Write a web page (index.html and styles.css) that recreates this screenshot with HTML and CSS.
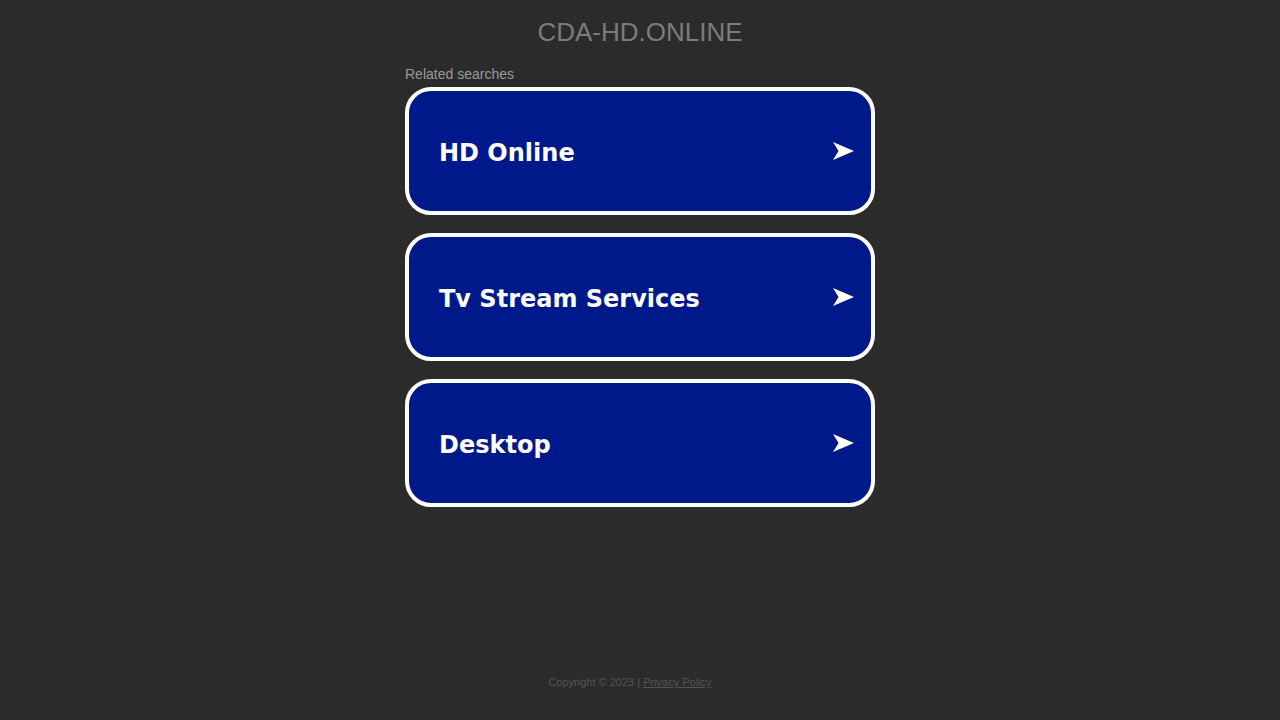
FILE: index.html
```html
<!DOCTYPE html>
<html lang="en">
<head>
<meta charset="utf-8">
<meta name="viewport" content="width=device-width, initial-scale=1">
<title>cda-hd.online</title>
<link rel="stylesheet" href="styles.css">
</head>
<body>
<header class="header"><h1 class="domain">CDA-HD.ONLINE</h1></header>
<main class="content">
  <h2 class="label">Related searches</h2>
  <nav class="links" aria-label="Related searches">
    <a class="card" href="#"><span class="card-title">HD Online</span><svg class="arrow" viewBox="0 0 21 18" aria-hidden="true"><path d="M0 0L21 9L0 18L5.5 9Z"/></svg></a>
    <a class="card" href="#"><span class="card-title">Tv Stream Services</span><svg class="arrow" viewBox="0 0 21 18" aria-hidden="true"><path d="M0 0L21 9L0 18L5.5 9Z"/></svg></a>
    <a class="card" href="#"><span class="card-title">Desktop</span><svg class="arrow" viewBox="0 0 21 18" aria-hidden="true"><path d="M0 0L21 9L0 18L5.5 9Z"/></svg></a>
  </nav>
</main>
<footer class="footer">Copyright © 2023 | <a class="policy" href="#">Privacy Policy</a></footer>
</body>
</html>
```

FILE: styles.css
```css
* { box-sizing: border-box; }
body {
  display: flex;
  flex-direction: column;
  min-height: 100vh;
  margin: 0;
  background: #2b2b2b;
  font-family: "Liberation Sans", Arial, sans-serif;
}
.header { padding: 16px 16px 0; text-align: center; }
.domain {
  margin: 0;
  color: #7c7c7c;
  font-size: 26px;
  font-weight: 400;
  line-height: 32px;
}
.content {
  width: 100%;
  max-width: 470px;
  margin: 18px auto 0;
}
.label {
  margin: 0 0 5px;
  color: #9a9a9a;
  font-size: 14px;
  font-weight: 400;
  line-height: 16px;
}
.links { display: flex; flex-direction: column; gap: 18px; }
.card {
  display: flex;
  align-items: center;
  justify-content: space-between;
  min-height: 128px;
  padding: 0 17px 0 30px;
  border: 4px solid #fff;
  border-radius: 26px;
  background: #00198a;
  color: #fff;
  font-family: "DejaVu Sans", Verdana, sans-serif;
  font-size: 24px;
  font-weight: 700;
  text-decoration: none;
}
.card-title { padding-top: 3px; }
.arrow { width: 21px; height: 18px; fill: #fff; }
.footer {
  margin: auto 20px 0 0;
  padding: 24px 0 30px;
  color: #555;
  font-size: 11px;
  line-height: 16px;
  text-align: center;
}
.policy { color: #555; }
```
